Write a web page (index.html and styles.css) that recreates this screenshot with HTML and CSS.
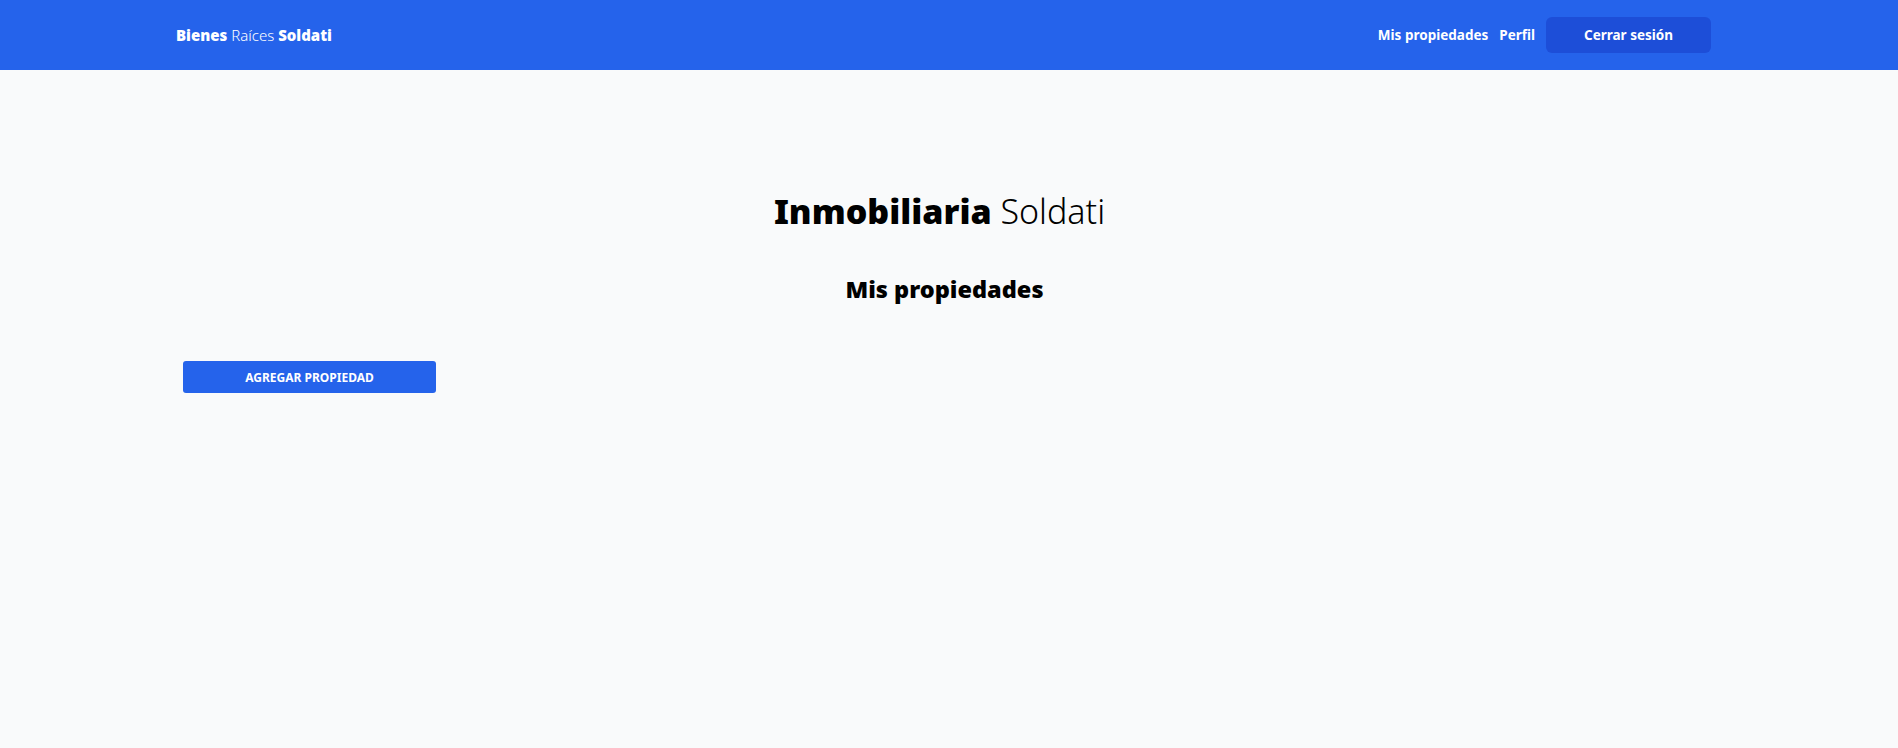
FILE: index.html
```html
<!DOCTYPE html>
<html lang="es">
<head>
<meta charset="utf-8">
<title>Mis propiedades</title>
<link rel="stylesheet" href="styles.css">
</head>
<body>
<header class="topbar">
  <div class="topbar-inner">
    <a class="brand" href="#"><b>Bienes</b> <span class="light">Raíces</span> <b>Soldati</b></a>
    <nav class="nav">
      <a class="nav-link" href="#">Mis propiedades</a>
      <a class="nav-link" href="#">Perfil</a>
      <button class="logout">Cerrar sesión</button>
    </nav>
  </div>
</header>
<main class="main">
  <h1 class="title"><span class="black">Inmobiliaria</span> <span class="thin">Soldati</span></h1>
  <h2 class="subtitle">Mis propiedades</h2>
  <div class="actions">
    <button class="add-btn">AGREGAR PROPIEDAD</button>
  </div>
</main>
</body>
</html>
```
FILE: styles.css
```css
* { box-sizing: border-box; }
html, body { margin: 0; padding: 0; }
body {
  background: #f9fafb;
  font-family: "Noto Sans", "Open Sans", sans-serif;
  color: #000;
  min-height: 748px;
}
.topbar {
  background: #2563eb;
  height: 70px;
}
.topbar-inner {
  height: 100%;
  padding: 0 187px 0 176px;
  display: flex;
  align-items: center;
  justify-content: space-between;
}
.brand {
  color: #fff;
  text-decoration: none;
  font-size: 15px;
  line-height: 24px;
}
.brand b { font-weight: 900; }
.brand .light { font-weight: 300; }
.nav {
  display: flex;
  align-items: center;
  gap: 11px;
}
.nav-link {
  color: #fff;
  text-decoration: none;
  font-weight: 700;
  font-size: 13.5px;
}
.logout {
  width: 165px;
  height: 36px;
  background: #1d4ed8;
  color: #fff;
  border: none;
  border-radius: 6px;
  font-family: inherit;
  font-weight: 700;
  font-size: 13.5px;
}
.main {
  padding: 0 195px 0 176px;
  display: flex;
  flex-direction: column;
}
.title {
  margin: 121px 0 0;
  text-align: center;
  font-size: 34px;
  line-height: 40px;
}
.title .black { font-weight: 900; }
.title .thin { font-weight: 300; }
.subtitle {
  margin: 42px 0 0;
  padding-left: 10px;
  text-align: center;
  font-size: 23.5px;
  line-height: 32px;
  font-weight: 900;
}
.actions {
  margin-top: 56px;
  padding-left: 7px;
}
.add-btn {
  width: 253px;
  height: 32px;
  background: #2563eb;
  color: #fff;
  border: none;
  border-radius: 3px;
  font-family: inherit;
  font-weight: 700;
  font-size: 12px;
}
```
